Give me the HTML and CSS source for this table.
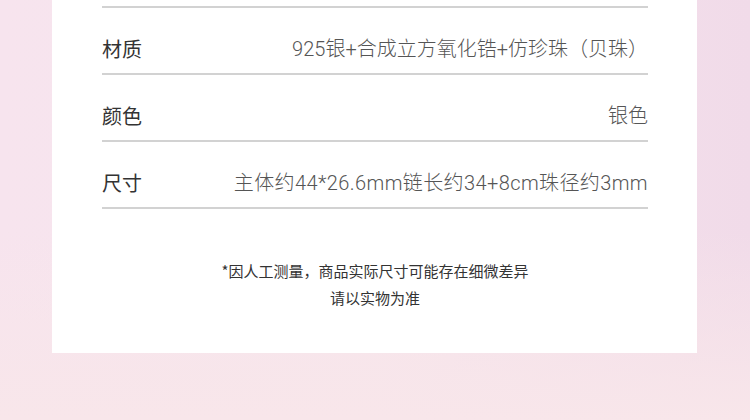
FILE: index.html
```html
<!DOCTYPE html>
<html lang="zh-CN">
<head>
    <meta charset="UTF-8">
    <meta name="viewport" content="width=device-width, initial-scale=1.0">
    <title>商品参数</title>
    <link rel="stylesheet" href="styles.css">
</head>
<body>
    <div class="card">
        <div class="specs">
            <div class="row">
                <span class="label">材质</span>
                <span class="value">925银+合成立方氧化锆+仿珍珠（贝珠）</span>
            </div>
            <div class="row">
                <span class="label">颜色</span>
                <span class="value">银色</span>
            </div>
            <div class="row">
                <span class="label">尺寸</span>
                <span class="value value-wide">主体约44*26.6mm链长约34+8cm珠径约3mm</span>
            </div>
        </div>
        <div class="note">
            <p>*因人工测量，商品实际尺寸可能存在细微差异</p>
            <p>请以实物为准</p>
        </div>
    </div>
</body>
</html>
```

FILE: styles.css
```css
body {
    margin: 0;
    height: 420px;
    overflow: hidden;
    font-family: "Noto Sans CJK SC", "Noto Sans", sans-serif;
    background:
        linear-gradient(180deg, rgba(248, 230, 234, 0) 55%, #f8e6ea 100%),
        linear-gradient(90deg, #f7e4ee 0%, #f6e5ed 50%, #f1dbe9 100%);
}

.card {
    margin-left: 52px;
    width: 645px;
    box-sizing: border-box;
    padding: 6px 49px 0 50px;
    background: #fff;
}

.specs {
    border-top: 2px solid #d2d2d2;
}

.row {
    display: flex;
    justify-content: space-between;
    align-items: center;
    height: 28px;
    padding: 27px 0 10px;
    border-bottom: 2px solid #d2d2d2;
    line-height: 28px;
}

.label {
    font-size: 20px;
    color: #333;
}

.value {
    font-family: "Roboto", "Noto Sans CJK SC", sans-serif;
    font-size: 20px;
    font-weight: 300;
    color: #555;
}

.value-wide {
    letter-spacing: 0.4px;
}

.note {
    padding: 48px 0 42px;
    text-align: center;
    font-size: 15px;
    line-height: 27px;
    color: #333;
}

.note p {
    margin: 0;
}
```
